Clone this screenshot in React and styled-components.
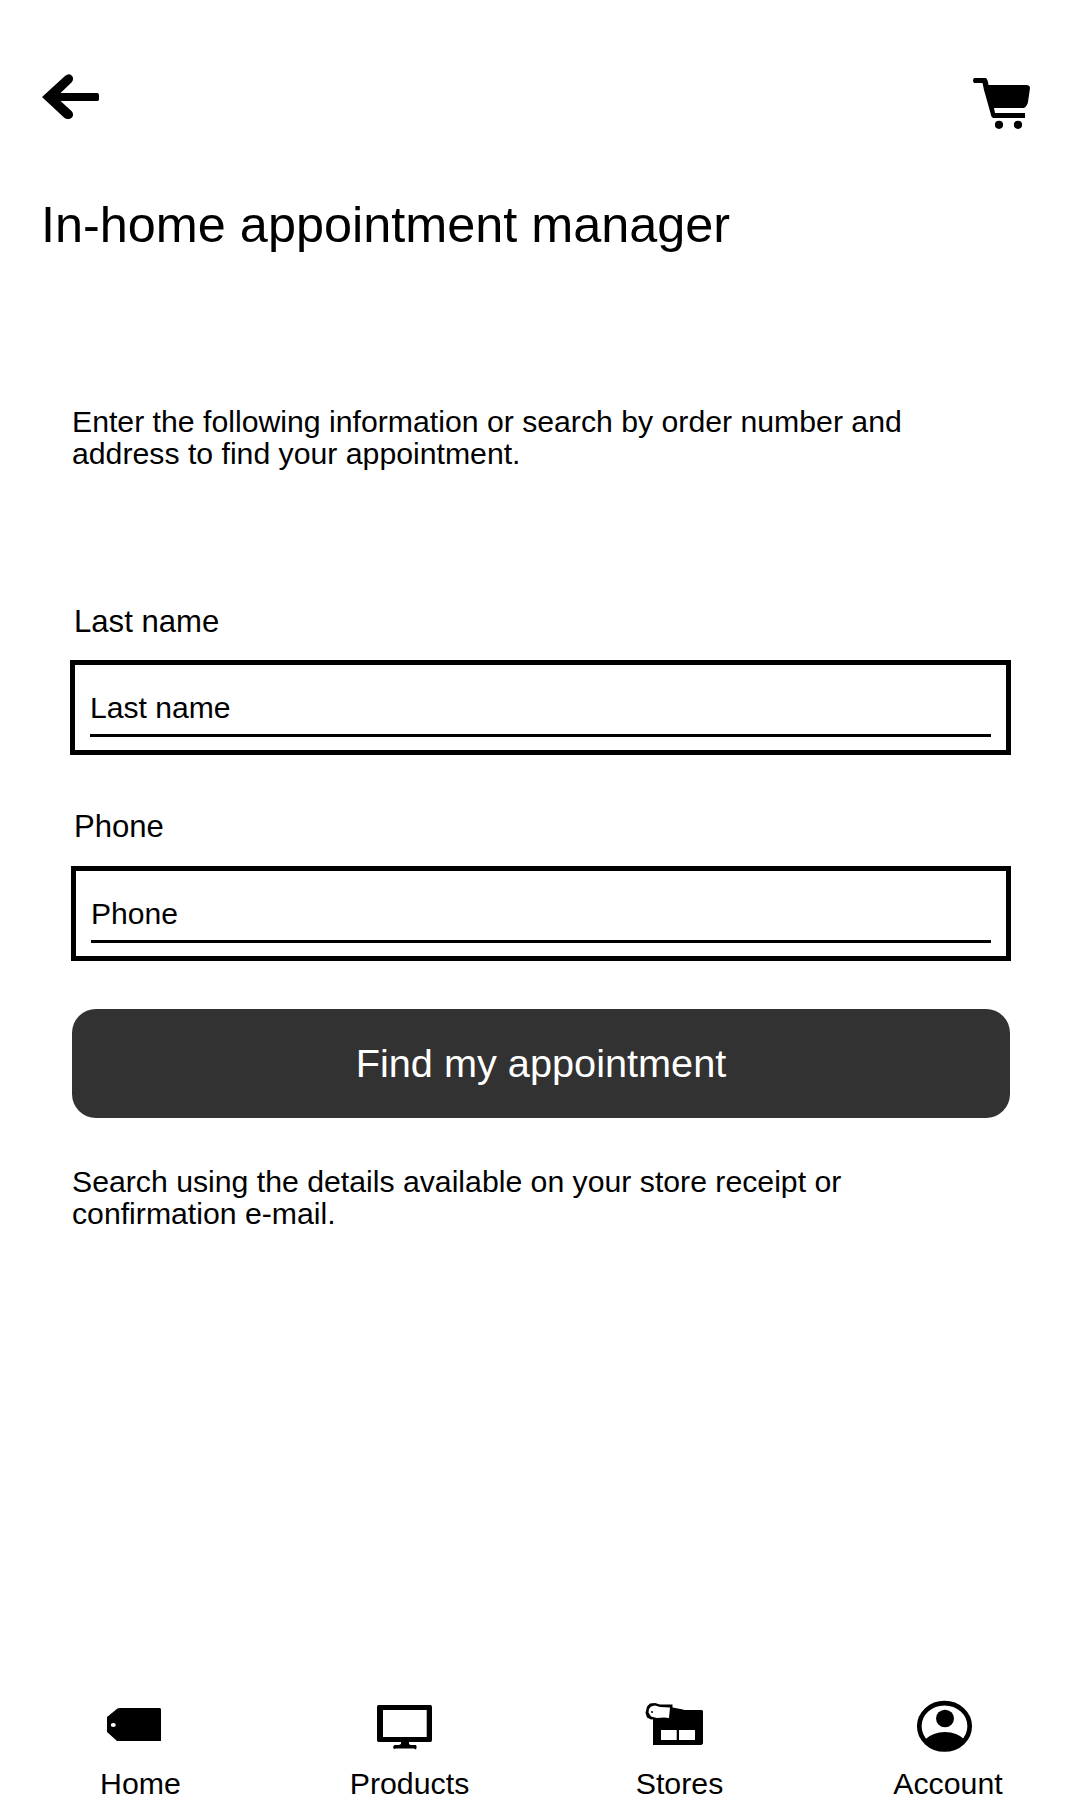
import React from 'react';
import styled, { createGlobalStyle } from 'styled-components';

const GlobalStyle = createGlobalStyle`
  *, *::before, *::after { box-sizing: border-box; }
  html, body { margin: 0; padding: 0; background: #fff; }
  body { font-family: "Liberation Sans", Arial, Helvetica, sans-serif; color: #000; }
`;

const Screen = styled.div`
  display: flex;
  flex-direction: column;
  width: 1080px;
  height: 1800px;
  overflow: hidden;
  background: #fff;
`;

const Header = styled.header`
  display: flex;
  justify-content: space-between;
  align-items: flex-start;
  height: 195px;
  padding: 74px 50px 0 42px;
`;

const IconButton = styled.button`
  display: block;
  padding: 0;
  border: 0;
  margin-top: ${(p) => p.$drop || 0}px;
  background: none;
  color: #000;
`;

const Glyph = styled.svg`
  display: block;
  fill: currentColor;
`;

const Title = styled.h1`
  margin: 0 0 0 41px;
  font-size: 50.4px;
  font-weight: 400;
  line-height: 60px;
  white-space: nowrap;
`;

const Main = styled.main`
  display: flex;
  flex-direction: column;
  flex: 1;
  padding: 151px 69px 0 72px;
`;

const Paragraph = styled.p`
  margin: 0;
  font-size: 30.22px;
  line-height: 32px;
  white-space: nowrap;
`;

const Form = styled.form`
  display: flex;
  flex-direction: column;
  margin: 133px 0 48px;
`;

const Field = styled.div`
  display: flex;
  flex-direction: column;
  height: 206px;
  margin-left: ${(p) => p.$inset}px;
`;

const Label = styled.label`
  height: 57px;
  margin-left: ${(p) => p.$shift}px;
  font-size: 31.1px;
  line-height: ${(p) => p.$leading}px;
`;

const InputBox = styled.div`
  height: 95px;
  padding: 19px 15px 0;
  border: 5px solid #000;
`;

const Input = styled.input`
  display: block;
  width: 100%;
  height: 53px;
  padding: 0 0 2px;
  border: 0;
  border-bottom: 3px solid #000;
  border-radius: 0;
  outline: 0;
  background: transparent;
  font: 30.1px "Liberation Sans", Arial, sans-serif;
  color: #000;
  &::placeholder { color: #000; opacity: 1; }
`;

const SubmitButton = styled.button`
  width: 938px;
  height: 109px;
  margin-top: -6px;
  padding: 0 0 1px;
  border: 0;
  border-radius: 24px;
  background: #323232;
  color: #fff;
  font: 39.7px "Liberation Sans", Arial, sans-serif;
`;

const TabBar = styled.nav`
  display: grid;
  grid-template-columns: repeat(4, 270px);
  height: 110px;
`;

const Tab = styled.div`
  display: flex;
  flex-direction: column;
  align-items: center;
`;

const TabIcon = styled.div`
  height: 76px;
`;

const TabLabel = styled.span`
  padding-left: ${(p) => p.$shift}px;
  font-size: 30.3px;
  line-height: 36px;
`;

const BackIcon = () => (
  <Glyph width="57" height="45" viewBox="12 14 57 45">
    <path d="M12 37 35 16Q39.500 12.500 42.500 16.500 44 19.500 41.500 22.500L30.500 33H67.500Q69 33.500 69 35V39Q69 41 67.500 41H30.500L41.500 51Q44.500 54 42 57.500 38.500 60.500 34.500 58Z" />
  </Glyph>
);

const CartIcon = () => (
  <Glyph width="57" height="51" viewBox="13 13 57 51">
    <path d="M14 13H26Q28 15 28.500 20H67Q70 20.500 70 23L68 37Q67 41.500 64 43H34L35 48H65V53H33Q31 52 30.500 48L24 25 22.500 18H14Q12 15.500 14 13Z" />
    <circle cx="39" cy="59.800" r="4.100" />
    <circle cx="58" cy="59.800" r="4.100" />
  </Glyph>
);

const HomeIcon = () => (
  <Glyph width="110" height="66" viewBox="-10 0 110 66">
    <path fillRule="evenodd" d="M17 27 27.500 18.500 30 18H70L71 19V51H27L17 42ZM20.800 35a2.500 2 0 1 0 5 0 2.500 2 0 1 0-5 0Z" />
  </Glyph>
);

const ProductsIcon = () => (
  <Glyph width="110" height="66" viewBox="10 0 110 66">
    <path fillRule="evenodd" d="M38.500 15H90.500Q92 15 92 17V50Q92 52 90.500 52H69V54L70.500 55H76Q77.500 57 76 59.500L74 58.500H56L54 59Q52 57 54.500 55H59L61 54V52H38.500Q37 52 37 50V17Q37 15 38.500 15ZM43 20V47H86.700V20Z" />
  </Glyph>
);

const StoresIcon = () => (
  <Glyph width="110" height="66" viewBox="-10 0 110 66">
    <path d="M40 17 53 19.500 54 20H72L73 21V53.500L71.500 55H23V27Z" />
    <path d="M20 13.500 25 13 30 14.500 42.500 14.500V19L41 29H26L21 29.500 17 27.500 15.500 23 17 16.500Z" />
    <path fill="#fff" d="M21 16.500 25 15.500 30 17 40 17.500 39 28 34 27.500 27 28 21 26.500 18.500 22.500 19 19ZM31 40H46.700V50H31ZM49 40H65V50H49Z" />
    <circle cx="22" cy="22" r="1" />
  </Glyph>
);

const AccountIcon = () => (
  <Glyph width="110" height="66" viewBox="10 0 110 66">
    <ellipse cx="64.500" cy="36.300" rx="25.200" ry="23.200" fill="none" stroke="currentColor" strokeWidth="4.700" />
    <ellipse cx="65" cy="28.500" rx="9" ry="8.700" />
    <path d="M45 49.500Q53 42 65 42 77 42 84.500 49.500 77 60.500 65 61 52 60.500 45 49.500Z" />
  </Glyph>
);

const fields = [
  { id: 'last-name', text: 'Last name', inset: -2, shift: 4, leading: 37 },
  { id: 'phone', text: 'Phone', inset: -1, shift: 3, leading: 35 },
];

const tabs = [
  { text: 'Home', Icon: HomeIcon, shift: 11 },
  { text: 'Products', Icon: ProductsIcon, shift: 9 },
  { text: 'Stores', Icon: StoresIcon, shift: 9 },
  { text: 'Account', Icon: AccountIcon, shift: 6 },
];

export default function App() {
  return (
    <Screen>
      <GlobalStyle />
      <Header>
        <IconButton aria-label="Back"><BackIcon /></IconButton>
        <IconButton aria-label="Cart" $drop={4}><CartIcon /></IconButton>
      </Header>
      <Title>In-home appointment manager</Title>
      <Main>
        <Paragraph>
          Enter the following information or search by order number and<br />
          address to find your appointment.
        </Paragraph>
        <Form>
          {fields.map((f) => (
            <Field key={f.id} $inset={f.inset}>
              <Label htmlFor={f.id} $shift={f.shift} $leading={f.leading}>{f.text}</Label>
              <InputBox><Input id={f.id} placeholder={f.text} /></InputBox>
            </Field>
          ))}
          <SubmitButton type="button">Find my appointment</SubmitButton>
        </Form>
        <Paragraph>
          Search using the details available on your store receipt or<br />
          confirmation e-mail.
        </Paragraph>
      </Main>
      <TabBar>
        {tabs.map(({ text, Icon, shift }) => (
          <Tab key={text}>
            <TabIcon><Icon /></TabIcon>
            <TabLabel $shift={shift}>{text}</TabLabel>
          </Tab>
        ))}
      </TabBar>
    </Screen>
  );
}
